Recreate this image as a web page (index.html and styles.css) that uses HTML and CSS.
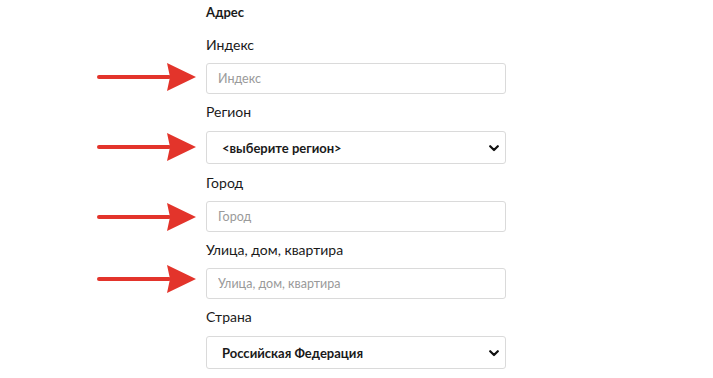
FILE: index.html
```html
<!DOCTYPE html>
<html lang="ru">
<head>
<meta charset="utf-8">
<title>Адрес</title>
<link rel="stylesheet" href="styles.css">
</head>
<body>
<form class="address">
  <div class="title">Адрес</div>

  <div class="field">
    <label class="label" for="zip">Индекс</label>
    <div class="control">
      <svg class="arrow arrow-a" viewBox="0 0 100 30" width="100" height="30"><rect x="0" y="13" width="74" height="4" rx="2" fill="#e3342b"/><polygon points="70,1 99,15 70,29 73,15" fill="#e3342b"/></svg>
      <input class="input" id="zip" type="text" placeholder="Индекс">
    </div>
  </div>

  <div class="field">
    <label class="label" for="region">Регион</label>
    <div class="control control-select">
      <svg class="arrow arrow-b" viewBox="0 0 100 30" width="100" height="30"><rect x="0" y="13" width="74" height="4" rx="2" fill="#e3342b"/><polygon points="70,1 99,15 70,29 73,15" fill="#e3342b"/></svg>
      <select class="select" id="region"><option>&lt;выберите регион&gt;</option></select>
      <svg class="chevron" viewBox="0 0 10 7" width="10" height="7"><path d="M1.2 1.2 L5 5 L8.8 1.2" fill="none" stroke="#111" stroke-width="2.2" stroke-linecap="round" stroke-linejoin="round"/></svg>
    </div>
  </div>

  <div class="field">
    <label class="label" for="city">Город</label>
    <div class="control">
      <svg class="arrow arrow-c" viewBox="0 0 100 30" width="100" height="30"><rect x="0" y="13" width="74" height="4" rx="2" fill="#e3342b"/><polygon points="70,1 99,15 70,29 73,15" fill="#e3342b"/></svg>
      <input class="input" id="city" type="text" placeholder="Город">
    </div>
  </div>

  <div class="field">
    <label class="label" for="street">Улица, дом, квартира</label>
    <div class="control">
      <svg class="arrow arrow-d" viewBox="0 0 100 30" width="100" height="30"><rect x="0" y="13" width="74" height="4" rx="2" fill="#e3342b"/><polygon points="70,1 99,15 70,29 73,15" fill="#e3342b"/></svg>
      <input class="input" id="street" type="text" placeholder="Улица, дом, квартира">
    </div>
  </div>

  <div class="field">
    <label class="label" for="country">Страна</label>
    <div class="control control-select">
      <select class="select" id="country"><option>Российская Федерация</option></select>
      <svg class="chevron" viewBox="0 0 10 7" width="10" height="7"><path d="M1.2 1.2 L5 5 L8.8 1.2" fill="none" stroke="#111" stroke-width="2.2" stroke-linecap="round" stroke-linejoin="round"/></svg>
    </div>
  </div>
</form>
</body>
</html>
```

FILE: styles.css
```css
html, body {
  margin: 0;
  padding: 0;
  background: #fff;
}

body {
  font-family: Lato, "Noto Sans", "Liberation Sans", sans-serif;
  color: #1a1a1a;
}

.address {
  width: 300px;
  margin-left: 206px;
  display: flex;
  flex-direction: column;
  gap: 7px;
}

.title {
  font-size: 13px;
  font-weight: 700;
  line-height: 24px;
  margin-bottom: 3px;
}

.field {
  display: flex;
  flex-direction: column;
  gap: 7px;
}

.label {
  font-size: 14px;
  line-height: 22px;
  color: #1a1a1a;
}

.control {
  position: relative;
}

.control-select {
  padding: 1px 0;
}

.input,
.select {
  box-sizing: border-box;
  display: block;
  width: 100%;
  margin: 0;
  border: 1px solid #dadada;
  border-radius: 3px;
  background: #fff;
  font-family: Lato, "Noto Sans", "Liberation Sans", sans-serif;
  outline: none;
}

.input {
  height: 31px;
  padding: 0 11px;
  font-size: 12.5px;
  color: #222;
}

.input::placeholder {
  color: #9a9a9a;
}

.select {
  height: 33px;
  padding: 0 30px 0 15px;
  font-size: 13px;
  font-weight: 700;
  color: #1a1a1a;
  appearance: none;
  -webkit-appearance: none;
}

.chevron {
  position: absolute;
  right: 7px;
  top: 15px;
  pointer-events: none;
}

.arrow {
  position: absolute;
  right: calc(100% + 9px);
  top: 50%;
  margin-top: -15px;
}

.arrow-a { margin-top: -17px; }
.arrow-b { margin-top: -16px; }
.arrow-c { margin-top: -15px; }
.arrow-d { margin-top: -20px; }
```
